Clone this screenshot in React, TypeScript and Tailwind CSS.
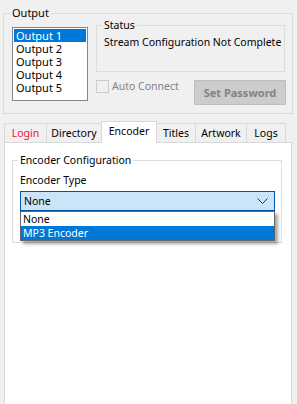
export default function App() {
  const items = ["Output 1", "Output 2", "Output 3", "Output 4", "Output 5"];
  return (
    <div className="w-[297px] h-[404px] bg-[#f0f0f0] overflow-hidden text-[10.5px] leading-[13px] text-black font-['Noto_Sans',sans-serif] pt-[13px] pl-[3px]">
      {/* Output group */}
      <div className="relative w-[290px] h-[101px] border border-[#dcdcdc] flex pl-[8px] pt-[11px] gap-[8px]">
        <span className="absolute left-[6px] top-[-8px] px-[2px] bg-[#f0f0f0] leading-[14px] text-[11px]">Output</span>
        <div className="mt-[2px] w-[76px] h-[74px] border border-[#828790] bg-white p-[1px]">
          {items.map((t, i) => (
            <div
              key={t}
              className={
                "h-[13px] pl-[2px] whitespace-nowrap text-[11px] leading-[13px] " +
                (i === 0 ? "bg-[#0078d7] text-white" : "text-black")
              }
            >
              {t}
            </div>
          ))}
        </div>
        <div className="flex flex-col w-[189px]">
          <div className="relative h-[47px] border border-[#dcdcdc] pl-[7px] pt-[10px]">
            <span className="absolute left-[5px] top-[-8px] px-[2px] bg-[#f0f0f0] leading-[14px]">Status</span>
            <div className="whitespace-nowrap">Stream Configuration Not Complete</div>
          </div>
          <div className="mt-[8px] flex justify-between items-start">
            <div className="flex items-center gap-[3px]">
              <div className="w-[13px] h-[13px] border border-[#cccccc] bg-[#f0f0f0]" />
              <span className="text-[#838383]">Auto Connect</span>
            </div>
            <div className="mr-[-1px] w-[92px] h-[25px] border border-[#bfbfbf] bg-[#cccccc] flex items-center justify-center font-bold text-[#838383] text-[11px]">
              Set Password
            </div>
          </div>
        </div>
      </div>

      {/* Tabs */}
      <div className="mt-[7px] ml-[1px] flex items-end h-[21px] relative z-10">
        <div className="w-[42px] h-[19px] border-t border-l border-[#d9d9d9] bg-[#f0f0f0] flex items-center justify-center text-[#f0103c] pt-[1px]">Login</div>
        <div className="w-[55px] h-[19px] border-t border-l border-[#d9d9d9] bg-[#f0f0f0] flex items-center justify-center pt-[1px]">Directory</div>
        <div className="w-[56px] h-[22px] mb-[-1px] border-t border-l border-r border-[#d9d9d9] bg-white flex items-center justify-center pb-[3px]">Encoder</div>
        <div className="w-[38px] h-[19px] border-t border-[#d9d9d9] bg-[#f0f0f0] flex items-center justify-center pt-[1px]">Titles</div>
        <div className="w-[51px] h-[19px] border-t border-l border-[#d9d9d9] bg-[#f0f0f0] flex items-center justify-center pt-[1px]">Artwork</div>
        <div className="w-[40px] h-[19px] border-t border-l border-r border-[#d9d9d9] bg-[#f0f0f0] flex items-center justify-center pt-[1px]">Logs</div>
      </div>

      {/* Panel */}
      <div className="ml-[1px] w-[288px] h-[300px] border border-[#d9d9d9] bg-white pl-[7px] pt-[17px]">
        <div className="relative w-[270px] h-[83px] border border-[#dcdcdc] pl-[7px] pt-[13px]">
          <span className="absolute left-[5px] top-[-8px] px-[2px] bg-white leading-[14px]">Encoder Configuration</span>
          <div>Encoder Type</div>
          <div className="relative mt-[4px]">
            <div className="w-[255px] h-[20px] border border-[#0054a6] bg-[#cce4f7] flex items-center justify-between pl-[3px] pr-[6px]">
              <span>None</span>
              <svg width="11" height="6" viewBox="0 0 11 6" className="block">
                <path d="M0.5 0.5 L5.5 5.5 L10.5 0.5" fill="none" stroke="#333" strokeWidth="1" />
              </svg>
            </div>
            <div className="absolute left-0 top-[20px] w-[255px] border border-[#646464] bg-white shadow-[3px_3px_3px_rgba(0,0,0,0.35)] z-20">
              <div className="h-[14px] pl-[2px] leading-[14px]">None</div>
              <div className="h-[14px] pl-[2px] leading-[14px] bg-[#0078d7] text-white">MP3 Encoder</div>
            </div>
          </div>
        </div>
      </div>
    </div>
  );
}
